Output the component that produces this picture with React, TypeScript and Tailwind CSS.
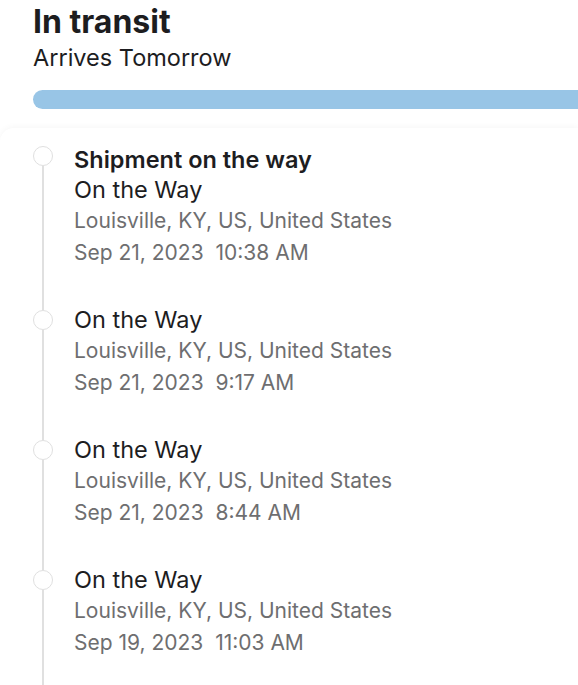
const events = [
  {
    title: 'Shipment on the way',
    status: 'On the Way',
    place: 'Louisville, KY, US, United States',
    date: 'Sep 21, 2023',
    time: '10:38 AM',
  },
  {
    status: 'On the Way',
    place: 'Louisville, KY, US, United States',
    date: 'Sep 21, 2023',
    time: '9:17 AM',
  },
  {
    status: 'On the Way',
    place: 'Louisville, KY, US, United States',
    date: 'Sep 21, 2023',
    time: '8:44 AM',
  },
  {
    status: 'On the Way',
    place: 'Louisville, KY, US, United States',
    date: 'Sep 19, 2023',
    time: '11:03 AM',
  },
]

interface TimelineItemProps {
  title?: string
  status: string
  place: string
  date: string
  time: string
  first: boolean
}

function TimelineItem({ title, status, place, date, time, first }: TimelineItemProps) {
  return (
    <div className="flex">
      <div className="flex w-[20px] flex-col items-center">
        <div className={first ? 'h-[3px]' : 'h-[5px] w-[2px] bg-[#e0e0e0]'} />
        <div className="h-[20px] w-[20px] rounded-full border-[1.5px] border-[#e0e0e0] bg-white" />
        <div className="w-[2px] flex-1 bg-[#e0e0e0]" />
      </div>

      <div className={`ml-[21px] pb-[36px] ${first ? 'mt-[2px]' : ''}`}>
        {title && (
          <div className="text-[23.5px] font-semibold leading-[30px] text-[#1d1d1f]">
            {title}
          </div>
        )}
        <div className="text-[23.5px] leading-[30px] text-[#1d1d1f]">{status}</div>
        <div className="text-[21px] leading-[32px] text-[#6e6e70]">{place}</div>
        <div className="text-[21px] leading-[32px] text-[#6e6e70]">
          {date}&nbsp;&nbsp;{time}
        </div>
      </div>
    </div>
  )
}

export default function App() {
  return (
    <div className="h-[685px] w-[578px] overflow-hidden bg-white font-['Inter',sans-serif]">
      <div className="pl-[33px] pt-[3px]">
        <h1 className="text-[32px] font-bold leading-[38px] text-[#1d1d1f]">In transit</h1>
        <p className="text-[23.5px] leading-[34px] text-[#1d1d1f]">Arrives Tomorrow</p>
        <div className="mt-[15px] h-[19px] w-[600px] rounded-full bg-[#98c5e6]" />
      </div>

      <div className="mt-[19px] rounded-tl-[14px] shadow-[0_-1px_6px_rgba(0,0,0,0.04)]">
        <div className="pl-[33px] pt-[15px]">
          {events.map((event, i) => (
            <TimelineItem key={i} {...event} first={i === 0} />
          ))}
        </div>
      </div>
    </div>
  )
}
